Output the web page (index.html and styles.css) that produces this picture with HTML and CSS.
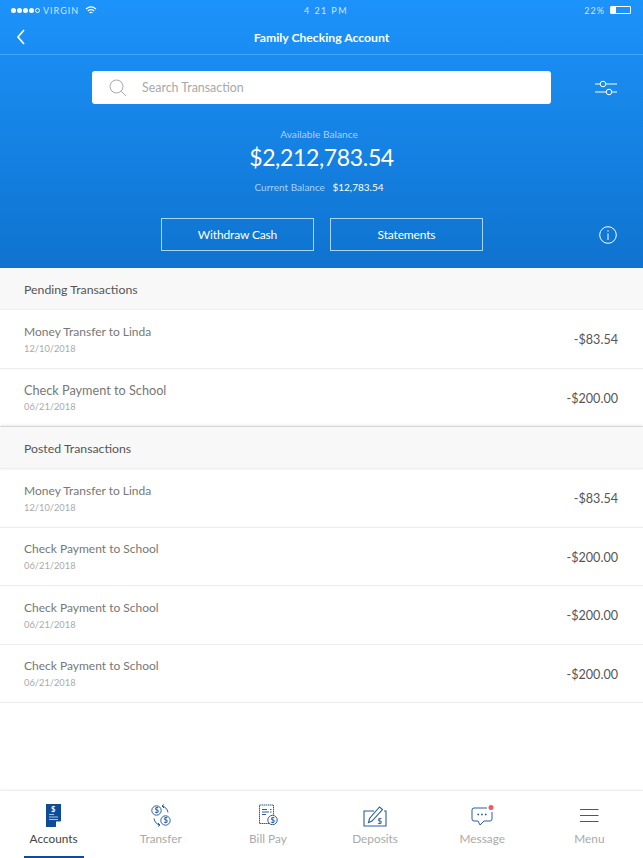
FILE: index.html
```html
<!DOCTYPE html>
<html lang="en">
<head>
    <meta charset="UTF-8">
    <meta name="viewport" content="width=device-width, initial-scale=1.0">
    <title>Family Checking Account</title>
    <link rel="stylesheet" href="styles.css">
</head>
<body>
    <div class="app">
        <header class="header">
            <div class="status-bar">
                <div class="status-left">
                    <span class="signal"><i></i><i></i><i></i><i></i><i class="empty"></i></span>
                    <span>VIRGIN</span>
                    <svg class="wifi" width="12" height="9" viewBox="0 0 12 9" fill="none" stroke="#fff" stroke-width="1.2">
                        <path d="M1 3 C4 .4 8 .4 11 3"/>
                        <path d="M2.8 5 C4.8 3.4 7.2 3.4 9.2 5"/>
                        <path d="M4.6 6.9 C5.5 6.2 6.5 6.2 7.4 6.9"/>
                    </svg>
                </div>
                <div class="status-time">4 21 PM</div>
                <div class="status-right">
                    <span>22%</span>
                    <span class="battery"><span class="battery-level"></span></span>
                </div>
            </div>
            <div class="nav-bar">
                <svg class="back" width="10" height="16" viewBox="0 0 10 16" fill="none" stroke="#fff" stroke-width="1.7">
                    <path d="M8 1 L2 8 L8 15"/>
                </svg>
                <div class="nav-title">Family Checking Account</div>
            </div>
            <div class="search-row">
                <div class="search-box">
                    <svg width="18" height="18" viewBox="0 0 18 18" fill="none" stroke="#a9a9a9" stroke-width="1">
                        <circle cx="7.5" cy="7.5" r="6.5"/>
                        <path d="M12.3 12.3 L17 17"/>
                    </svg>
                    <span>Search Transaction</span>
                </div>
                <svg class="filter" width="22" height="16" viewBox="0 0 22 16" fill="none" stroke="#fff" stroke-width="1">
                    <path d="M0 4 H5 M11 4 H22 M0 12 H11 M17 12 H22"/>
                    <circle cx="8" cy="4" r="2.8"/>
                    <circle cx="14" cy="12" r="2.8"/>
                </svg>
            </div>
            <div class="balance">
                <div class="balance-label">Available Balance</div>
                <div class="balance-amount">$2,212,783.54</div>
                <div class="balance-current">Current Balance <b>$12,783.54</b></div>
            </div>
            <div class="actions">
                <button class="action-btn">Withdraw Cash</button>
                <button class="action-btn">Statements</button>
                <svg class="info" width="18" height="18" viewBox="0 0 18 18" fill="none" stroke="#fff" stroke-width="1">
                    <circle cx="9" cy="9" r="8.3"/>
                    <path d="M9 7.5 V14 M9 4.2 V5.6"/>
                </svg>
            </div>
        </header>

        <section class="section-title">Pending Transactions</section>
        <div class="row">
            <div><div class="row-name">Money Transfer to Linda</div><div class="row-date">12/10/2018</div></div>
            <div class="row-amount">-$83.54</div>
        </div>
        <div class="row">
            <div><div class="row-name wide">Check Payment to School</div><div class="row-date">06/21/2018</div></div>
            <div class="row-amount">-$200.00</div>
        </div>

        <section class="section-title shadowed">Posted Transactions</section>
        <div class="row">
            <div><div class="row-name">Money Transfer to Linda</div><div class="row-date">12/10/2018</div></div>
            <div class="row-amount">-$83.54</div>
        </div>
        <div class="row">
            <div><div class="row-name">Check Payment to School</div><div class="row-date">06/21/2018</div></div>
            <div class="row-amount">-$200.00</div>
        </div>
        <div class="row">
            <div><div class="row-name">Check Payment to School</div><div class="row-date">06/21/2018</div></div>
            <div class="row-amount">-$200.00</div>
        </div>
        <div class="row">
            <div><div class="row-name">Check Payment to School</div><div class="row-date">06/21/2018</div></div>
            <div class="row-amount">-$200.00</div>
        </div>

        <nav class="tabs">
            <div class="tab active">
                <svg width="28" height="24" viewBox="0 0 28 24">
                    <path d="M6 0 H21 V17 L15.5 23 H6 Z" fill="#0f4c97"/>
                    <path d="M16 23 V17.5 H21 Z" fill="#fff"/>
                    <path d="M9 10.5 H14 M9 13 H18 M9 15.5 H18" stroke="#a9c6e8" stroke-width="1"/>
                    <text class="dollar" x="11" y="7.5" fill="#fff">$</text>
                </svg>
                <span>Accounts</span>
            </div>
            <div class="tab">
                <svg width="28" height="24" viewBox="0 0 28 24" fill="none" stroke="#2a5f9f" stroke-width="1">
                    <circle cx="9.5" cy="6.5" r="4.7"/>
                    <circle cx="18.5" cy="16.5" r="4.7"/>
                    <text class="dollar" x="7.5" y="9" fill="#2a5f9f" stroke="none">$</text>
                    <text class="dollar" x="16.5" y="19" fill="#2a5f9f" stroke="none">$</text>
                    <path d="M15 2 C18 2.5 20.5 5 21 8.5 M15 2 L17 .5 M15 2 L17 4"/>
                    <path d="M13 21 C10 20.5 7.5 18 7 14.5 M13 21 L11 22.5 M13 21 L11 19"/>
                </svg>
                <span>Transfer</span>
            </div>
            <div class="tab">
                <svg width="28" height="24" viewBox="0 0 28 24" fill="none" stroke="#2a5f9f" stroke-width="1">
                    <path d="M15 19.5 H5.5 V1 H19.5 V11" stroke-dasharray="1.5 .5"/>
                    <path d="M8 5.5 H13 M8 8 H15 M8 10.5 H12 M16 5.5 H17.5 M16 8 H17.5"/>
                    <circle cx="18.5" cy="16" r="4.7"/>
                    <text class="dollar" x="16.5" y="18.5" fill="#2a5f9f" stroke="none">$</text>
                </svg>
                <span>Bill Pay</span>
            </div>
            <div class="tab">
                <svg width="28" height="24" viewBox="0 0 28 24" fill="none" stroke="#2a5f9f" stroke-width="1.1">
                    <path d="M13 7 H3 V22 H25 V7 H23"/>
                    <path d="M7.5 18.5 L8.5 14.5 L18.5 3 L21.5 5.5 L11 17 Z"/>
                    <text class="dollar" x="16.5" y="20" fill="#2a5f9f" stroke="none">$</text>
                </svg>
                <span>Deposits</span>
            </div>
            <div class="tab">
                <svg width="28" height="24" viewBox="0 0 28 24" fill="none" stroke="#2a5f9f" stroke-width="1">
                    <path d="M19 4 H6 Q4 4 4 6 V15 Q4 17 6 17 H10 L12 21 L16 17 H22 Q24 17 24 15 V8"/>
                    <path d="M9.5 10.5 H11 M13.2 10.5 H14.7 M17 10.5 H18.5" stroke="#0f4c97" stroke-width="1.7"/>
                    <circle cx="23" cy="3.5" r="2.5" fill="#ee5a63" stroke="none"/>
                </svg>
                <span>Message</span>
            </div>
            <div class="tab">
                <svg width="28" height="24" viewBox="0 0 28 24" fill="none" stroke="#2a5f9f" stroke-width="1">
                    <path d="M5 5.5 H23.5 M5 11.5 H23.5 M5 17.5 H23.5"/>
                </svg>
                <span>Menu</span>
            </div>
        </nav>
    </div>
</body>
</html>
```

FILE: styles.css
```css
* {
    box-sizing: border-box;
}
body {
    margin: 0;
    font-family: Lato, "Noto Sans", Arial, sans-serif;
    background-color: #fff;
    color: #555;
}
.app {
    width: 643px;
    height: 858px;
    display: flex;
    flex-direction: column;
    overflow: hidden;
}
.header {
    height: 268px;
    background: linear-gradient(#1c93fb, #0f73cf);
    color: #fff;
}
.status-bar {
    height: 20px;
    display: grid;
    grid-template-columns: 1fr auto 1fr;
    align-items: center;
    padding: 0 11px;
    font-size: 9px;
    letter-spacing: 1px;
    color: #cfe6fd;
}
.status-left {
    display: flex;
    align-items: center;
    gap: 3px;
}
.signal {
    display: flex;
    gap: 1px;
}
.signal i {
    width: 5px;
    height: 5px;
    border-radius: 50%;
    background: #fff;
}
.signal i.empty {
    background: none;
    border: 1px solid #fff;
}
.wifi {
    margin-left: 3px;
}
.status-time {
    padding-left: 9px;
    letter-spacing: 1.4px;
}
.status-right {
    display: flex;
    justify-content: flex-end;
    align-items: center;
    gap: 5px;
}
.battery {
    width: 21px;
    height: 8px;
    border: 1px solid #fff;
    border-radius: 1px;
    margin-right: 1px;
}
.battery-level {
    display: block;
    width: 5px;
    height: 100%;
    background: #fff;
}
.nav-bar {
    position: relative;
    height: 35px;
    display: flex;
    align-items: center;
    justify-content: center;
    border-bottom: 1px solid #45a7fb;
}
.back {
    position: absolute;
    left: 16px;
    top: 9px;
}
.nav-title {
    font-size: 12.2px;
    font-weight: 700;
}
.search-row {
    display: flex;
    align-items: center;
    height: 33px;
    margin-top: 16px;
    padding-left: 92px;
}
.search-box {
    width: 459px;
    height: 33px;
    display: flex;
    align-items: center;
    gap: 15px;
    padding-left: 17px;
    background: #fff;
    border-radius: 3px;
    font-size: 12.4px;
    color: #a9a9a9;
}
.filter {
    margin-left: 44px;
}
.balance {
    margin-top: 23px;
    text-align: center;
    padding-right: 5px;
}
.balance-label {
    font-size: 10.2px;
    line-height: 14px;
    color: #a6d2fb;
}
.balance-amount {
    font-size: 23px;
    letter-spacing: -0.35px;
    line-height: 32px;
    padding-left: 5px;
}
.balance-current {
    margin-top: 7px;
    font-size: 10px;
    line-height: 14px;
    color: #a6d2fb;
}
.balance-current b {
    font-weight: 400;
    color: #fff;
    margin-left: 5px;
}
.actions {
    display: flex;
    align-items: center;
    gap: 16px;
    margin-top: 24px;
    padding-left: 161px;
}
.action-btn {
    width: 153px;
    height: 33px;
    background: none;
    border: 1px solid #a6d6fc;
    color: #fff;
    font-family: inherit;
    font-size: 12px;
    letter-spacing: -0.15px;
    padding: 0;
}
.info {
    margin-left: 100px;
}
.section-title {
    height: 42px;
    display: flex;
    align-items: center;
    padding: 1px 0 0 24px;
    background: #f8f8f8;
    border-bottom: 1px solid #eee;
    font-size: 12.3px;
    color: #555;
}
.section-title.shadowed {
    box-shadow: 0 -1px 3px rgba(0,0,0,0.15);
}
.row {
    height: 58.5px;
    display: flex;
    justify-content: space-between;
    align-items: center;
    padding: 2px 25px 0 24px;
    border-bottom: 1px solid #ececec;
}
.row-name {
    font-size: 12px;
    line-height: 16px;
    color: #777;
}
.row-name.wide {
    font-size: 12.7px;
}
.row-date {
    margin-top: 2px;
    font-size: 9.3px;
    line-height: 14px;
    color: #aaa;
}
.row-amount {
    font-size: 12.6px;
    color: #555;
}
.tabs {
    margin-top: auto;
    height: 68px;
    display: grid;
    grid-template-columns: repeat(6, 1fr);
    border-top: 1px solid #eee;
    box-shadow: 0 -1px 2px rgba(0,0,0,0.04);
}
.tab {
    display: flex;
    flex-direction: column;
    align-items: center;
    padding-top: 13px;
    font-size: 11.8px;
    color: #aaa;
}
.tab span {
    margin-top: 3px;
}
.tab.active {
    color: #444;
    border-bottom: 2px solid #0f4c97;
    width: 60px;
    justify-self: center;
}
.dollar {
    font-size: 7.5px;
    font-weight: 700;
}
```
